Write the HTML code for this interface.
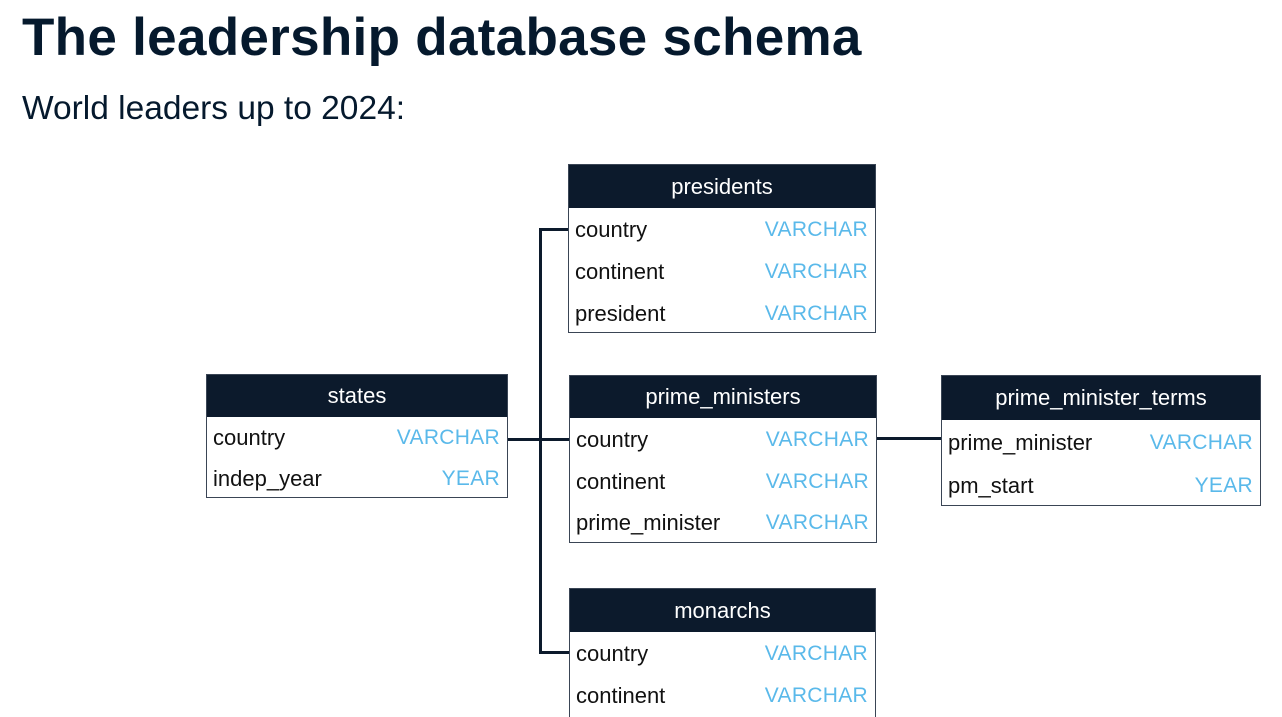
<!DOCTYPE html>
<html><head><style>
*{margin:0;padding:0;box-sizing:border-box}
html,body{width:1282px;height:717px;overflow:hidden}
body{background:#fff;position:relative;font-family:"Liberation Sans",sans-serif;color:#05192d}
.t{position:absolute;left:22px;top:7px;font-size:53px;font-weight:bold;letter-spacing:0.3px;white-space:nowrap}
.s{position:absolute;left:22px;top:90px;font-size:33.5px;white-space:nowrap}
.tb{position:absolute;border:1.5px solid #3a4555;background:#fff}
.h{background:#0c1a2c;color:#fff;text-align:center;font-size:22px;display:flex;align-items:center;justify-content:center}
.r{display:flex;justify-content:space-between;align-items:center;padding:1px 7px 0 6px;font-size:22px;color:#111}
.r b{font-weight:normal;color:#5ab9ea;font-size:21px;letter-spacing:0.3px}
.l{position:absolute;background:#0c1a2c}
</style></head><body>
<div class="t">The leadership database schema</div>
<div class="s">World leaders up to 2024:</div>

<div class="l" style="left:539px;top:228px;width:3px;height:426px"></div>
<div class="l" style="left:539px;top:228px;width:30px;height:3px"></div>
<div class="l" style="left:507px;top:438px;width:62px;height:3px"></div>
<div class="l" style="left:539px;top:651px;width:30px;height:3px"></div>
<div class="l" style="left:876px;top:437px;width:66px;height:3px"></div>

<div class="tb" style="left:568px;top:164px;width:308px;height:169px">
<div class="h" style="height:43px">presidents</div>
<div class="r" style="height:42px"><span>country</span><b>VARCHAR</b></div>
<div class="r" style="height:42px"><span>continent</span><b>VARCHAR</b></div>
<div class="r" style="height:42px"><span>president</span><b>VARCHAR</b></div>
</div>

<div class="tb" style="left:206px;top:374px;width:302px;height:124px">
<div class="h" style="height:42px">states</div>
<div class="r" style="height:41px"><span>country</span><b>VARCHAR</b></div>
<div class="r" style="height:41px"><span>indep_year</span><b>YEAR</b></div>
</div>

<div class="tb" style="left:569px;top:375px;width:308px;height:168px">
<div class="h" style="height:42px">prime_ministers</div>
<div class="r" style="height:42px"><span>country</span><b>VARCHAR</b></div>
<div class="r" style="height:42px"><span>continent</span><b>VARCHAR</b></div>
<div class="r" style="height:41px"><span>prime_minister</span><b>VARCHAR</b></div>
</div>

<div class="tb" style="left:941px;top:375px;width:320px;height:131px">
<div class="h" style="height:44px">prime_minister_terms</div>
<div class="r" style="height:44px"><span>prime_minister</span><b>VARCHAR</b></div>
<div class="r" style="height:43px"><span>pm_start</span><b>YEAR</b></div>
</div>

<div class="tb" style="left:569px;top:588px;width:307px;height:140px">
<div class="h" style="height:43px">monarchs</div>
<div class="r" style="height:42px"><span>country</span><b>VARCHAR</b></div>
<div class="r" style="height:42px"><span>continent</span><b>VARCHAR</b></div>
</div>
</body></html>
